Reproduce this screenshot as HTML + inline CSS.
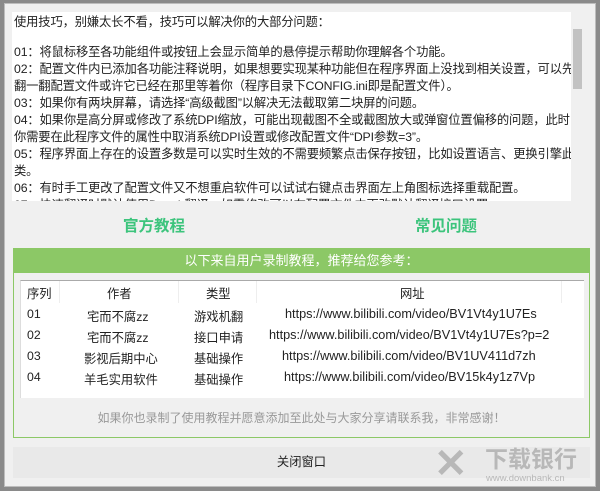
<!DOCTYPE html>
<html><head><meta charset="utf-8"><style>
*{margin:0;padding:0;box-sizing:border-box}
body{width:600px;height:491px;background:#8a8a8a;font-family:"Liberation Sans","Microsoft YaHei","Noto Sans CJK SC",sans-serif;position:relative;overflow:hidden;font-size:12px;color:#222}
.win{position:absolute;left:4px;top:3px;width:592px;height:484px;background:#f0f0f0;border:1px solid #bdbdbd}
.ta{position:absolute;left:12px;top:12px;width:572px;height:189px;background:#fff;overflow:hidden}
.ta .t{position:absolute;left:2px;top:2px;width:562px;line-height:17px;font-size:12.3px;color:#222;letter-spacing:-0.15px}
.sb{position:absolute;right:0;top:0;width:13px;height:189px;background:#f0f0f0}
.sb .th{position:absolute;left:2px;top:17px;width:9px;height:60px;background:#c2c2c2}
.tab{position:absolute;top:214px;font-size:15.5px;font-weight:bold;color:#3cc47c}
.box{position:absolute;left:13px;top:248px;width:577px;height:190px;border:1px solid #8cc866}
.hd{height:24px;background:#8cc866;color:#fff;text-align:center;line-height:24px;font-size:13px}
.tbl{position:absolute;left:6px;top:31px;width:564px;height:118px;background:#fff;border-top:1px solid #aaa;border-left:1px solid #ddd}
.c{position:absolute;font-size:12.3px;white-space:nowrap}
.u{font-size:12.7px}
.ft{position:absolute;top:160px;width:100%;text-align:center;color:#999;font-size:12px}
.btn{position:absolute;left:13px;top:447px;width:577px;height:31px;background:#e9e9e9;text-align:center;line-height:31px;font-size:12.3px}
.wm{position:absolute;color:#b8b8b8;white-space:nowrap}
</style></head><body>
<div class="win"></div>
<div class="ta"><div class="t">使用技巧，别嫌太长不看，技巧可以解决你的大部分问题：<div style="height:13px"></div>01：将鼠标移至各功能组件或按钮上会显示简单的悬停提示帮助你理解各个功能。<br>02：配置文件内已添加各功能注释说明，如果想要实现某种功能但在程序界面上没找到相关设置，可以先翻一翻配置文件或许它已经在那里等着你（程序目录下CONFIG.ini即是配置文件）。<br>03：如果你有两块屏幕，请选择“高级截图”以解决无法截取第二块屏的问题。<br>04：如果你是高分屏或修改了系统DPI缩放，可能出现截图不全或截图放大或弹窗位置偏移的问题，此时你需要在此程序文件的属性中取消系统DPI设置或修改配置文件“DPI参数=3”。<br>05：程序界面上存在的设置多数是可以实时生效的不需要频繁点击保存按钮，比如设置语言、更换引擎此类。<br>06：有时手工更改了配置文件又不想重启软件可以试试右键点击界面左上角图标选择重载配置。<br>07：快速翻译时默认使用DeepL翻译，如需修改可以在配置文件中更改默认翻译接口设置。</div>
<div class="sb"><div class="th"></div></div></div>
<div class="tab" style="left:123px">官方教程</div>
<div class="tab" style="left:415px">常见问题</div>
<div class="box"><div class="hd">以下来自用户录制教程，推荐给您参考：</div>
<div class="tbl">
<div style="position:absolute;left:38px;top:0;width:1px;height:22px;background:#eee"></div>
<div style="position:absolute;left:157px;top:0;width:1px;height:22px;background:#eee"></div>
<div style="position:absolute;left:235px;top:0;width:1px;height:22px;background:#eee"></div>
<div style="position:absolute;left:540px;top:0;width:1px;height:22px;background:#eee"></div>
<div class="c" style="left:6px;top:3px">序列</div><div class="c" style="left:86px;top:3px">作者</div><div class="c" style="left:185px;top:3px">类型</div><div class="c" style="left:379px;top:3px">网址</div>
<div class="c" style="left:6px;top:26px">01</div><div class="c" style="left:66px;top:26px">宅而不腐zz</div><div class="c" style="left:173px;top:26px">游戏机翻</div><div class="c u" style="left:264px;top:26px">https://www.bilibili.com/video/BV1Vt4y1U7Es</div>
<div class="c" style="left:6px;top:47px">02</div><div class="c" style="left:66px;top:47px">宅而不腐zz</div><div class="c" style="left:173px;top:47px">接口申请</div><div class="c u" style="left:248px;top:47px">https://www.bilibili.com/video/BV1Vt4y1U7Es?p=2</div>
<div class="c" style="left:6px;top:68px">03</div><div class="c" style="left:63px;top:68px">影视后期中心</div><div class="c" style="left:173px;top:68px">基础操作</div><div class="c u" style="left:261px;top:68px">https://www.bilibili.com/video/BV1UV411d7zh</div>
<div class="c" style="left:6px;top:89px">04</div><div class="c" style="left:63px;top:89px">羊毛实用软件</div><div class="c" style="left:173px;top:89px">基础操作</div><div class="c u" style="left:263px;top:89px">https://www.bilibili.com/video/BV15k4y1z7Vp</div>
</div>
<div class="ft">如果你也录制了使用教程并愿意添加至此处与大家分享请联系我，非常感谢！</div>
</div>
<div class="btn">关闭窗口</div>
<div class="wm" style="left:434px;top:444px;font-size:40px;font-weight:bold;line-height:40px">✕</div>
<div class="wm" style="left:485px;top:446px;font-size:23px;font-weight:bold;line-height:26px">下载银行</div>
<div class="wm" style="left:486px;top:473px;font-size:9.5px">www.downbank.cn</div>
</body></html>
